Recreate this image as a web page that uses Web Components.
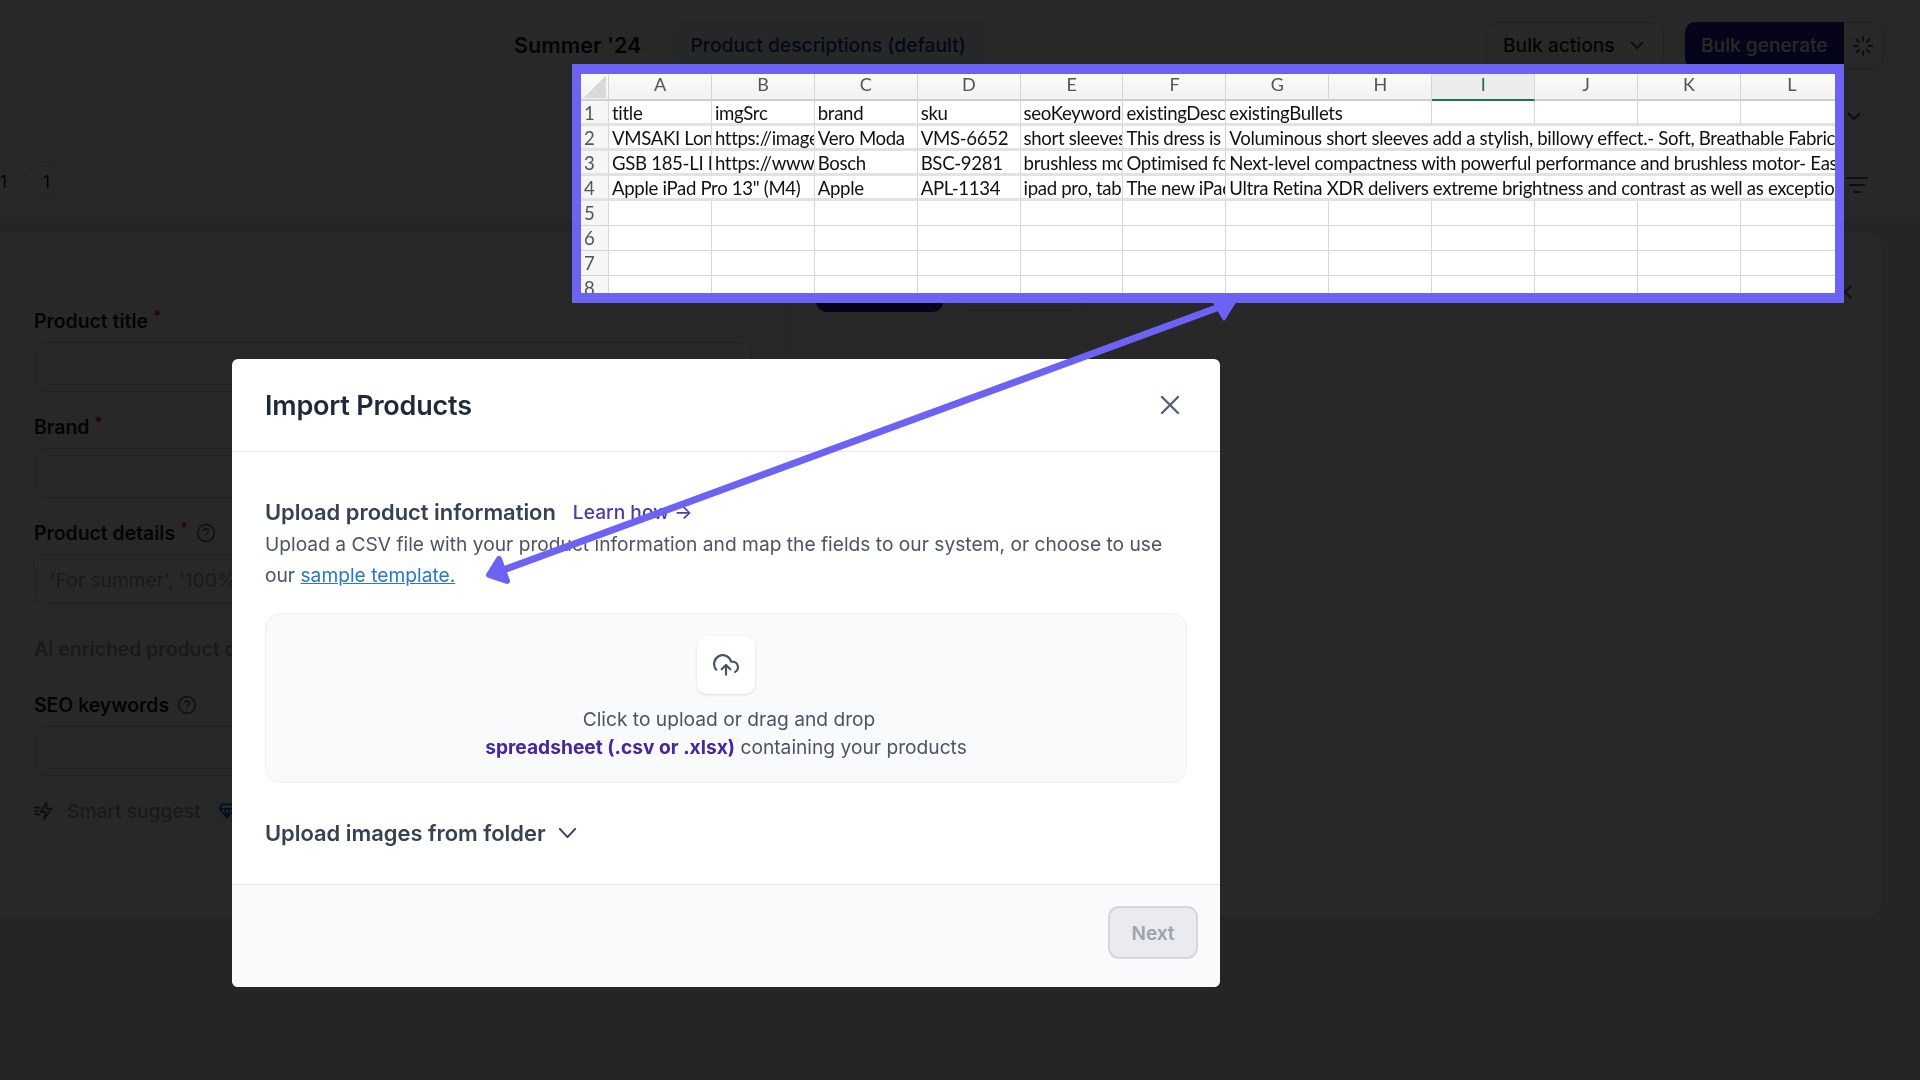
<!DOCTYPE html>
<html lang="en">
<head>
<meta charset="utf-8">
<title>Import Products</title>
<style>
    html, body { margin: 0; padding: 0; }
    body { width: 1920px; height: 1080px; overflow: hidden; background: #ececee; font-family: Inter, "Liberation Sans", sans-serif; }
</style>
</head>
<body>
<app-background></app-background>
<dim-overlay></dim-overlay>
<import-modal></import-modal>
<callout-arrow></callout-arrow>
<sheet-callout></sheet-callout>

<script>
const template_field = document.createElement('template');
template_field.innerHTML = `
    <style>
        :host { display: block; margin-bottom: 23px; }
        .label { display: flex; align-items: center; gap: 8px; height: 24px; font-size: 19.4px; font-weight: 600; color: #111827; }
        .req { color: #dc2626; font-size: 15px; margin-left: -3px; position: relative; top: -5px; }
        .box { margin-top: 9px; height: 50px; box-sizing: border-box; border: 1px solid #d1d5db; border-radius: 10px; background: #fff; padding: 2px 0 0 15px; display: flex; align-items: center; font-size: 19.2px; color: #9ca3af; white-space: nowrap; }
        svg { width: 20px; height: 20px; fill: none; stroke: #6b7280; stroke-width: 2; stroke-linecap: round; }
    </style>
    <div class="label"><span class="name"></span><span class="req">*</span>
        <svg class="help" viewBox="0 0 24 24"><circle cx="12" cy="12" r="10"/><path d="M9.1 9a3 3 0 0 1 5.8 1c0 2-3 2.6-3 4.2"/><path d="M12 17.6h.01"/></svg>
    </div>
    <div class="box"><slot></slot></div>
`;

class FormField extends HTMLElement {
    constructor() {
        super();
        this.attachShadow({ mode: 'open' });
        this.shadowRoot.appendChild(template_field.content.cloneNode(true));
    }
    connectedCallback() {
        this.shadowRoot.querySelector('.name').textContent = this.getAttribute('label');
        if (!this.hasAttribute('required')) this.shadowRoot.querySelector('.req').remove();
        if (!this.hasAttribute('help')) this.shadowRoot.querySelector('.help').remove();
    }
}
customElements.define('form-field', FormField);

const template_background = document.createElement('template');
template_background.innerHTML = `
    <style>
        :host { display: block; width: 1920px; height: 1080px; overflow: hidden; font-family: Inter, "Liberation Sans", sans-serif; filter: blur(.4px); }
        header { height: 220px; box-sizing: border-box; background: #fff; border-bottom: 1px solid #e5e7eb; position: relative; }
        .top { display: flex; align-items: flex-start; padding: 22px 37px 0 514px; }
        .title { font-size: 21.6px; font-weight: 600; color: #111827; line-height: 46px; }
        .tab { margin-left: 33px; padding: 0 20px 0 16px; height: 46px; line-height: 46px; border-radius: 8px; background: #f3f6fb; font-size: 19.3px; font-weight: 500; color: #1e3a8a; }
        .right { margin-left: auto; display: flex; gap: 21px; }
        .btn { height: 46px; line-height: 44px; box-sizing: border-box; border: 1px solid #d1d5db; border-radius: 10px; font-size: 19.2px; font-weight: 500; color: #111827; display: flex; align-items: center; }
        .actions { width: 178px; padding-left: 16px; gap: 14px; }
        .split { display: flex; }
        .primary { width: 159px; padding-left: 16px; border: 0; border-radius: 10px 0 0 10px; color: #fff; background: #231a9c; }
        .spin { width: 39px; justify-content: center; border-left: 0; border-radius: 0 10px 10px 0; height: 47px; }
        svg { fill: none; stroke: #4b5563; stroke-width: 2; stroke-linecap: round; stroke-linejoin: round; }
        .chev2 { display: flex; justify-content: flex-end; padding: 39px 58px 0 0; height: 20px; }
        .row { display: flex; align-items: flex-start; justify-content: space-between; padding: 37px 52px 0 25px; }
        .pill { width: 43px; height: 32px; line-height: 32px; text-align: center; border: 1px solid #e5e7eb; border-radius: 16px; box-sizing: border-box; font-size: 17px; color: #111827; position: relative; }
        .pill::before { content: '1'; position: absolute; left: -25px; top: 0; width: 6px; overflow: hidden; direction: rtl; }
        .filter { margin-top: 11px; }
        .card { margin: 12px 39px 0 0; height: 685px; background: #fff; border-radius: 0 14px 14px 0; display: grid; grid-template-columns: 787px 1fr; }
        .form { border-right: 1px solid #e5e7eb; padding: 76.5px 34px 0 34px; }
        .ai { font-size: 19.4px; font-weight: 600; color: #9ca3af; height: 24px; margin: 33px 0 32.5px; white-space: nowrap; }
        .smart { display: flex; align-items: center; gap: 13px; font-size: 19.2px; font-weight: 500; color: #9ca3af; }
        .gem { margin-left: -2px; background: #eff6ff; border-radius: 6px; padding: 3px 6px; display: flex; }
        .output { padding: 36px 0 0 29px; display: flex; gap: 12px; position: relative; }
        .go { width: 127px; height: 44px; background: #231a9c; border-radius: 10px; }
        .ghost { width: 130px; height: 43px; border: 1px solid #d1d5db; border-radius: 10px; box-sizing: border-box; }
        .xmark { position: absolute; right: 26px; top: 50px; }
    </style>
    <header>
        <div class="top">
            <span class="title">Summer '24</span>
            <span class="tab">Product descriptions (default)</span>
            <div class="right">
                <div class="btn actions">Bulk actions
                    <svg width="16" height="16" viewBox="0 0 16 16"><path d="M2.5 5.5 8 11l5.5-5.5"/></svg>
                </div>
                <div class="split">
                    <div class="btn primary">Bulk generate</div>
                    <div class="btn spin">
                        <svg width="22" height="22" viewBox="0 0 24 24"><path d="M12 2v4M12 18v4M4.9 4.9l2.9 2.9M16.2 16.2l2.9 2.9M2 12h4M18 12h4M4.9 19.1l2.9-2.9M16.2 7.8l2.9-2.9"/></svg>
                    </div>
                </div>
            </div>
        </div>
        <div class="chev2"><svg width="16" height="16" viewBox="0 0 16 16"><path d="M2.5 5.5 8 11l5.5-5.5"/></svg></div>
        <div class="row">
            <div class="pill">1</div>
            <svg class="filter" width="22" height="18" viewBox="0 0 22 18"><path d="M1 2h20M4 9h14M8 16h6"/></svg>
        </div>
    </header>
    <div class="card">
        <div class="form">
            <form-field label="Product title" required></form-field>
            <form-field label="Brand" required></form-field>
            <form-field label="Product details" required help>'For summer', '100% cotton'</form-field>
            <div class="ai">AI enriched product details</div>
            <form-field label="SEO keywords" help></form-field>
            <div class="smart">
                <svg width="20" height="20" viewBox="0 0 24 24"><path d="M1 8h6M1 12h4M1 16h6M15 2 8 13h6l-2 9 9-13h-6z"/></svg>
                <span>Smart suggest</span>
                <span class="gem"><svg width="18" height="18" viewBox="0 0 24 24" style="stroke:#1d4ed8"><path d="M6 3h12l4 6-10 12L2 9zM2 9h20M9 9l3 12 3-12"/></svg></span>
            </div>
        </div>
        <div class="output">
            <div class="go"></div>
            <div class="ghost"></div>
            <svg class="xmark" width="20" height="20" viewBox="0 0 24 24"><path d="M5 5l14 14M19 5 5 19"/></svg>
        </div>
    </div>
`;

class AppBackground extends HTMLElement {
    constructor() {
        super();
        this.attachShadow({ mode: 'open' });
        this.shadowRoot.appendChild(template_background.content.cloneNode(true));
    }
}
customElements.define('app-background', AppBackground);

class DimOverlay extends HTMLElement {
    constructor() {
        super();
        this.attachShadow({ mode: 'open' });
        this.shadowRoot.innerHTML = `<style>:host { position: absolute; inset: 0; background: rgba(0, 0, 0, .845); }</style>`;
    }
}
customElements.define('dim-overlay', DimOverlay);

const template_dropzone = document.createElement('template');
template_dropzone.innerHTML = `
    <style>
        :host { display: block; height: 170px; box-sizing: border-box; background: #f9fafb; border: 1px solid #f0f1f4; border-radius: 16px; padding-top: 22px; text-align: center; font-size: 19.2px; line-height: 28px; color: #4b5563; }
        .icon { width: 58px; height: 58px; margin: 0 auto 11px; background: #fff; border-radius: 10px; box-shadow: 0 1px 3px rgba(16, 24, 40, .12); display: flex; align-items: center; justify-content: center; }
        svg { width: 26px; height: 26px; fill: none; stroke: #475467; stroke-width: 2; stroke-linecap: round; stroke-linejoin: round; }
        .first { padding-left: 6px; }
        b { font-weight: 700; color: #4527a0; }
    </style>
    <div class="icon">
        <svg viewBox="0 0 24 24"><path d="M16 16l-4-4-4 4"/><path d="M12 12v9"/><path d="M20.39 18.39A5 5 0 0 0 18 9h-1.26A8 8 0 1 0 3 16.3"/></svg>
    </div>
    <div class="first">Click to upload or drag and drop</div>
    <div><b>spreadsheet (.csv or .xlsx)</b> containing your products</div>
`;

class UploadDropzone extends HTMLElement {
    constructor() {
        super();
        this.attachShadow({ mode: 'open' });
        this.shadowRoot.appendChild(template_dropzone.content.cloneNode(true));
    }
}
customElements.define('upload-dropzone', UploadDropzone);

const template_modal = document.createElement('template');
template_modal.innerHTML = `
    <style>
        :host { position: absolute; left: 232px; top: 359px; width: 988px; height: 628px; background: #fff; border-radius: 6px; overflow: hidden; display: flex; flex-direction: column; font-family: Inter, "Liberation Sans", sans-serif; filter: blur(.25px); }
        .head { height: 93px; box-sizing: border-box; border-bottom: 1px solid #e5e7eb; padding: 0 40px 0 33px; display: flex; align-items: center; justify-content: space-between; }
        h2 { margin: 0; font-size: 27px; font-weight: 600; color: #1f2937; letter-spacing: -.2px; }
        .close { width: 20px; height: 20px; fill: none; stroke: #566070; stroke-width: 2.4; stroke-linecap: round; }
        .body { flex: 1; padding: 48px 33px 0; }
        .line { display: flex; align-items: center; height: 24px; }
        h3 { margin: 0; font-size: 21.9px; font-weight: 600; color: #374151; }
        .learn { margin-left: 17px; font-size: 19.2px; font-weight: 500; color: #4c3ba6; }
        p { margin: 5px 0 22px; font-size: 19.2px; line-height: 31px; color: #4b5563; }
        p a { color: #2b78c5; text-decoration: underline; }
        .folder { margin-top: 38px; gap: 12px; }
        .folder svg { width: 19px; height: 12px; fill: none; stroke: #374151; stroke-width: 2.2; stroke-linecap: round; stroke-linejoin: round; }
        .foot { height: 103px; box-sizing: border-box; border-top: 1px solid #e5e7eb; background: #f9fafb; padding: 21px 22px 0 0; display: flex; justify-content: flex-end; align-items: flex-start; }
        .next { width: 90px; height: 53px; line-height: 51px; box-sizing: border-box; text-align: center; background: #e9ebf0; border: 2px solid #d3d7de; border-radius: 11px; font-size: 19px; font-weight: 600; color: #9ca3af; }
    </style>
    <div class="head">
        <h2>Import Products</h2>
        <svg class="close" viewBox="0 0 20 20"><path d="M2 2l16 16M18 2 2 18"/></svg>
    </div>
    <div class="body">
        <div class="line"><h3>Upload product information</h3><span class="learn">Learn how →</span></div>
        <p>Upload a CSV file with your product information and map the fields to our system, or choose to use our <a>sample template.</a></p>
        <upload-dropzone></upload-dropzone>
        <div class="line folder">
            <h3>Upload images from folder</h3>
            <svg viewBox="0 0 21 13"><path d="M2 2l8.5 9L19 2"/></svg>
        </div>
    </div>
    <div class="foot"><div class="next">Next</div></div>
`;

class ImportModal extends HTMLElement {
    constructor() {
        super();
        this.attachShadow({ mode: 'open' });
        this.shadowRoot.appendChild(template_modal.content.cloneNode(true));
    }
}
customElements.define('import-modal', ImportModal);

class CalloutArrow extends HTMLElement {
    constructor() {
        super();
        this.attachShadow({ mode: 'open' });
        this.shadowRoot.innerHTML = `
            <style>
                :host { position: absolute; inset: 0; pointer-events: none; }
                svg { display: block; }
            </style>
            <svg width="1920" height="1080" viewBox="0 0 1920 1080">
                <line x1="1222" y1="306" x2="498" y2="572" stroke="#6c63f5" stroke-width="7"/>
                <polygon points="489,575 499,559 507,581" fill="#6c63f5" stroke="#6c63f5" stroke-width="6" stroke-linejoin="round"/>
                <polygon points="1212,298 1237,298 1224,319" fill="#6c63f5" stroke="#6c63f5" stroke-width="3" stroke-linejoin="round"/>
            </svg>
        `;
    }
}
customElements.define('callout-arrow', CalloutArrow);

const sheet_rows = [
    [['title'], ['imgSrc'], ['brand'], ['sku'], ['seoKeywords'], ['existingDescription'], ['existingBullets', 2]],
    [['VMSAKI Long Sleeve'], ['https://images'], ['Vero Moda'], ['VMS-6652'], ['short sleeves'], ['This dress is'], ['Voluminous short sleeves add a stylish, billowy effect.- Soft, Breathable Fabric', 6]],
    [['GSB 185-LI Professional'], ['https://www.bosch'], ['Bosch'], ['BSC-9281'], ['brushless motor'], ['Optimised for'], ['Next-level compactness with powerful performance and brushless motor- Easy', 6]],
    [['Apple iPad Pro 13" (M4)', 2], ['Apple'], ['APL-1134'], ['ipad pro, tablet'], ['The new iPad'], ['Ultra Retina XDR delivers extreme brightness and contrast as well as exceptional', 6]],
];

const template_sheet = document.createElement('template');
template_sheet.innerHTML = `
    <style>
        :host { position: absolute; left: 572px; top: 64px; width: 1272px; height: 239px; box-sizing: border-box; background: #fff; border-style: solid; border-color: #6c63f5; border-width: 10px 9px 10px 9px; overflow: hidden; font-family: Lato, "Liberation Sans", sans-serif; }
        .grid { display: grid; grid-template-columns: 28px repeat(12, 102.9px); grid-template-rows: 27px repeat(8, 25px); width: 1262px; filter: blur(.35px); }
        .c { box-sizing: border-box; border-right: 1px solid #d6d6d6; border-bottom: 1px solid #d6d6d6; padding-left: 3px; font-size: 18.6px; line-height: 24px; color: #111; white-space: nowrap; overflow: hidden; letter-spacing: -.32px; }
        .filled { border-bottom: 3px solid #e2e2e2; }
        .h { background: linear-gradient(#fbfbfb, #f2f2f2); border-bottom: 2px solid #cfcfcf; color: #555; text-align: center; padding: 0; line-height: 21px; font-size: 18px; }
        .sel { background: #ececec; border-bottom: 2px solid #217346; color: #217346; }
        .n { background: #f6f6f6; color: #555; padding: 0 0 0 3px; text-align: left; }
        .corner { position: relative; }
        .corner::after { content: ''; position: absolute; left: 2px; top: 1px; width: 23px; height: 23px; background: linear-gradient(135deg, transparent 50%, #d9d9d9 50%); }
    </style>
    <div class="grid"></div>
`;

class SheetCallout extends HTMLElement {
    constructor() {
        super();
        this.attachShadow({ mode: 'open' });
        this.shadowRoot.appendChild(template_sheet.content.cloneNode(true));
    }

    addCell(grid, classes, text, span) {
        const cell = document.createElement('div');
        cell.className = 'c ' + classes;
        cell.textContent = text;
        if (span) cell.style.gridColumn = 'span ' + span;
        grid.appendChild(cell);
    }

    connectedCallback() {
        const grid = this.shadowRoot.querySelector('.grid');

        this.addCell(grid, 'h corner', '');
        'ABCDEFGHIJKL'.split('').forEach((letra) => {
            this.addCell(grid, letra === 'I' ? 'h sel' : 'h', letra);
        });

        for (let r = 0; r < 8; r++) {
            const cells = sheet_rows[r] || [];
            const filled = r < 4 ? 'filled' : '';
            this.addCell(grid, 'n ' + filled, String(r + 1));

            let used = 0;
            cells.forEach(([text, span]) => {
                this.addCell(grid, filled, text, span);
                used += span || 1;
            });
            for (; used < 12; used++) this.addCell(grid, filled, '');
        }
    }
}
customElements.define('sheet-callout', SheetCallout);
</script>
</body>
</html>
